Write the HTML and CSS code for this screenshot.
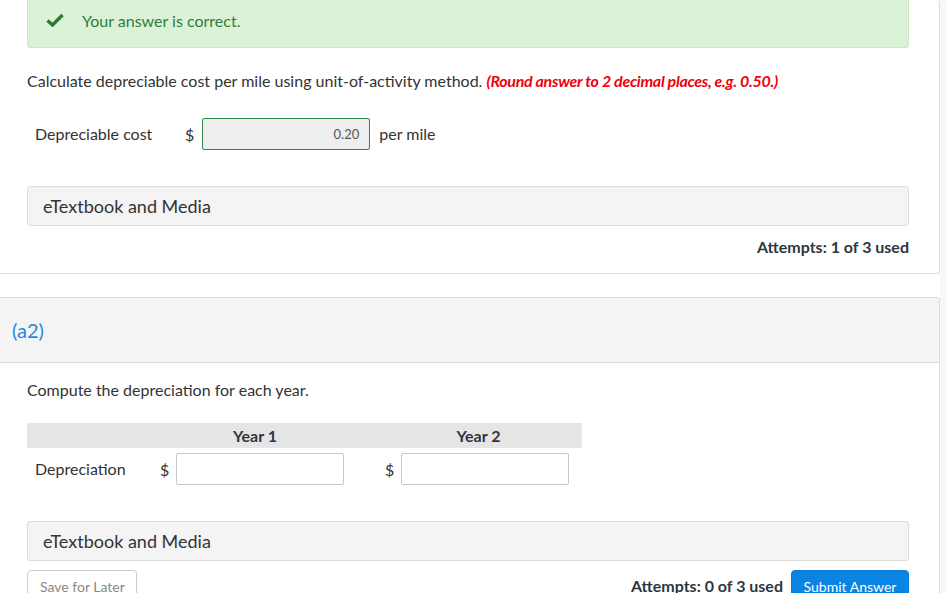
FILE: index.html
```html
<!DOCTYPE html>
<html>
<head>
    <meta charset="utf-8">
    <link rel="stylesheet" href="styles.css">
</head>
<body>
    <div class="page">
        <div class="main">
            <!-- Part (a1), already answered -->
            <div class="card card-done">
                <div class="alert-success">
                    <svg class="check" width="18" height="14" viewBox="0 0 18 14">
                        <path d="M1.5 7.5 L6.5 12 L16.5 2" fill="none" stroke="#2a7a36" stroke-width="3.4" stroke-linejoin="miter"/>
                    </svg>
                    <span>Your answer is correct.</span>
                </div>

                <p class="prompt">Calculate depreciable cost per mile using unit-of-activity method. <em class="hint">(Round answer to 2 decimal places, e.g. 0.50.)</em></p>

                <div class="answer-row">
                    <span class="row-label">Depreciable cost</span>
                    <span class="dollar">$</span>
                    <div class="answer-box correct">0.20</div>
                    <span class="unit">per mile</span>
                </div>

                <div class="media-bar">eTextbook and Media</div>

                <div class="attempts">Attempts: 1 of 3 used</div>
            </div>

            <!-- Part (a2) -->
            <div class="card">
                <div class="card-header">(a2)</div>
                <div class="card-body">
                    <p class="prompt">Compute the depreciation for each year.</p>

                    <div class="grid-table">
                        <div class="th"></div>
                        <div class="th th-first">Year 1</div>
                        <div class="th">Year 2</div>

                        <div class="td row-label">Depreciation</div>
                        <div class="td td-first">
                            <span class="dollar">$</span>
                            <div class="answer-box"></div>
                        </div>
                        <div class="td">
                            <span class="dollar">$</span>
                            <div class="answer-box"></div>
                        </div>
                    </div>

                    <div class="media-bar">eTextbook and Media</div>

                    <div class="actions">
                        <div class="btn btn-save">Save for Later</div>
                        <div class="actions-right">
                            <span class="attempts-inline">Attempts: 0 of 3 used</span>
                            <div class="btn btn-submit">Submit Answer</div>
                        </div>
                    </div>
                </div>
            </div>
        </div>
        <div class="gutter"></div>
    </div>
</body>
</html>
```

FILE: styles.css
```css
* {
    margin: 0;
    padding: 0;
    box-sizing: border-box;
}

html, body {
    width: 100%;
    height: 100%;
    overflow: hidden;
    background: #fff;
}

body {
    font-family: Lato, "Open Sans", sans-serif;
    font-size: 16px;
    color: #333;
}

.page {
    display: flex;
    height: 100%;
}

.main {
    width: 940px;
}

.gutter {
    flex: 1;
    background: #f7f7f7;
}

.card {
    border: 1px solid #dcdcdc;
    border-left: none;
    border-radius: 0 3px 3px 0;
    background: #fff;
}

.card-done {
    border-top: none;
    padding: 0 30px 0 27px;
    height: 274px;
    margin-bottom: 23px;
}

.alert-success {
    display: flex;
    align-items: center;
    height: 48px;
    padding: 0 0 6px 18px;
    background: #dbf2d6;
    border: 1px solid #cbe8c3;
    border-top: none;
    border-radius: 0 0 4px 4px;
    color: #2e7d3a;
}

.check {
    margin-right: 18px;
    margin-top: -2px;
}

.prompt {
    margin-top: 23px;
    line-height: 20px;
    color: #333;
}

.hint {
    color: #f0000a;
    font-weight: bold;
    font-style: italic;
    letter-spacing: -0.3px;
}

.answer-row {
    display: flex;
    align-items: center;
    margin-top: 27px;
    height: 32px;
}

.row-label {
    padding-left: 8px;
    padding-bottom: 2px;
    color: #333;
}

.answer-row .row-label {
    width: 158px;
}

.dollar {
    color: #333;
    margin-right: 8px;
}

.answer-box {
    height: 32px;
    width: 168px;
    border: 1px solid #c8c8c8;
    border-radius: 2px;
    background: #fff;
}

.answer-box.correct {
    border-color: #2e8b3e;
    background: #eee;
    text-align: right;
    font-size: 13px;
    color: #555;
    line-height: 30px;
    padding-right: 10px;
}

.unit {
    margin-left: 9px;
    padding-bottom: 2px;
}

.media-bar {
    margin-top: 36px;
    height: 40px;
    padding-left: 15px;
    line-height: 38px;
    font-size: 18px;
    color: #333;
    background: #f4f4f4;
    border: 1px solid #dcdcdc;
    border-radius: 3px;
}

.attempts {
    text-align: right;
    font-weight: bold;
    margin-top: 11px;
    line-height: 20px;
    color: #2d3740;
}

.card-header {
    height: 65px;
    background: #f4f4f4;
    border-bottom: 1px solid #dcdcdc;
    padding-left: 12px;
    line-height: 64px;
    font-size: 20px;
    color: #1a8be3;
}

.card-body {
    padding: 0 30px 0 27px;
}

.card-body .prompt {
    margin-top: 17px;
}

.grid-table {
    display: grid;
    grid-template-columns: 123px 225px 207px;
    margin-top: 23px;
}

.th {
    height: 25px;
    background: #e5e5e5;
    text-align: center;
    font-weight: bold;
    line-height: 25px;
    color: #2d3740;
}

.th-first {
    padding-right: 15px;
}

.td {
    display: flex;
    align-items: center;
    height: 32px;
    margin-top: 5px;
}

.td-first,
.td:last-child {
    padding-left: 10px;
}

.td .dollar {
    margin-right: 7px;
}

.card-body .media-bar {
    margin-top: 36px;
}

.actions {
    display: flex;
    justify-content: space-between;
    margin-top: 9px;
}

.actions-right {
    display: flex;
    align-items: flex-start;
}

.btn {
    height: 34px;
    border-radius: 4px;
    font-size: 14px;
    line-height: 32px;
    padding: 0 12px;
    white-space: nowrap;
}

.btn-save {
    width: 110px;
    border: 1px solid #ccc;
    color: #888;
    background: #fff;
}

.attempts-inline {
    font-weight: bold;
    color: #2d3740;
    margin-right: 8px;
    margin-top: 6px;
    line-height: 20px;
}

.btn-submit {
    width: 118px;
    background: #0a84e3;
    border: 1px solid #0a7dd8;
    color: #fff;
    text-align: center;
    padding: 0;
}
```
